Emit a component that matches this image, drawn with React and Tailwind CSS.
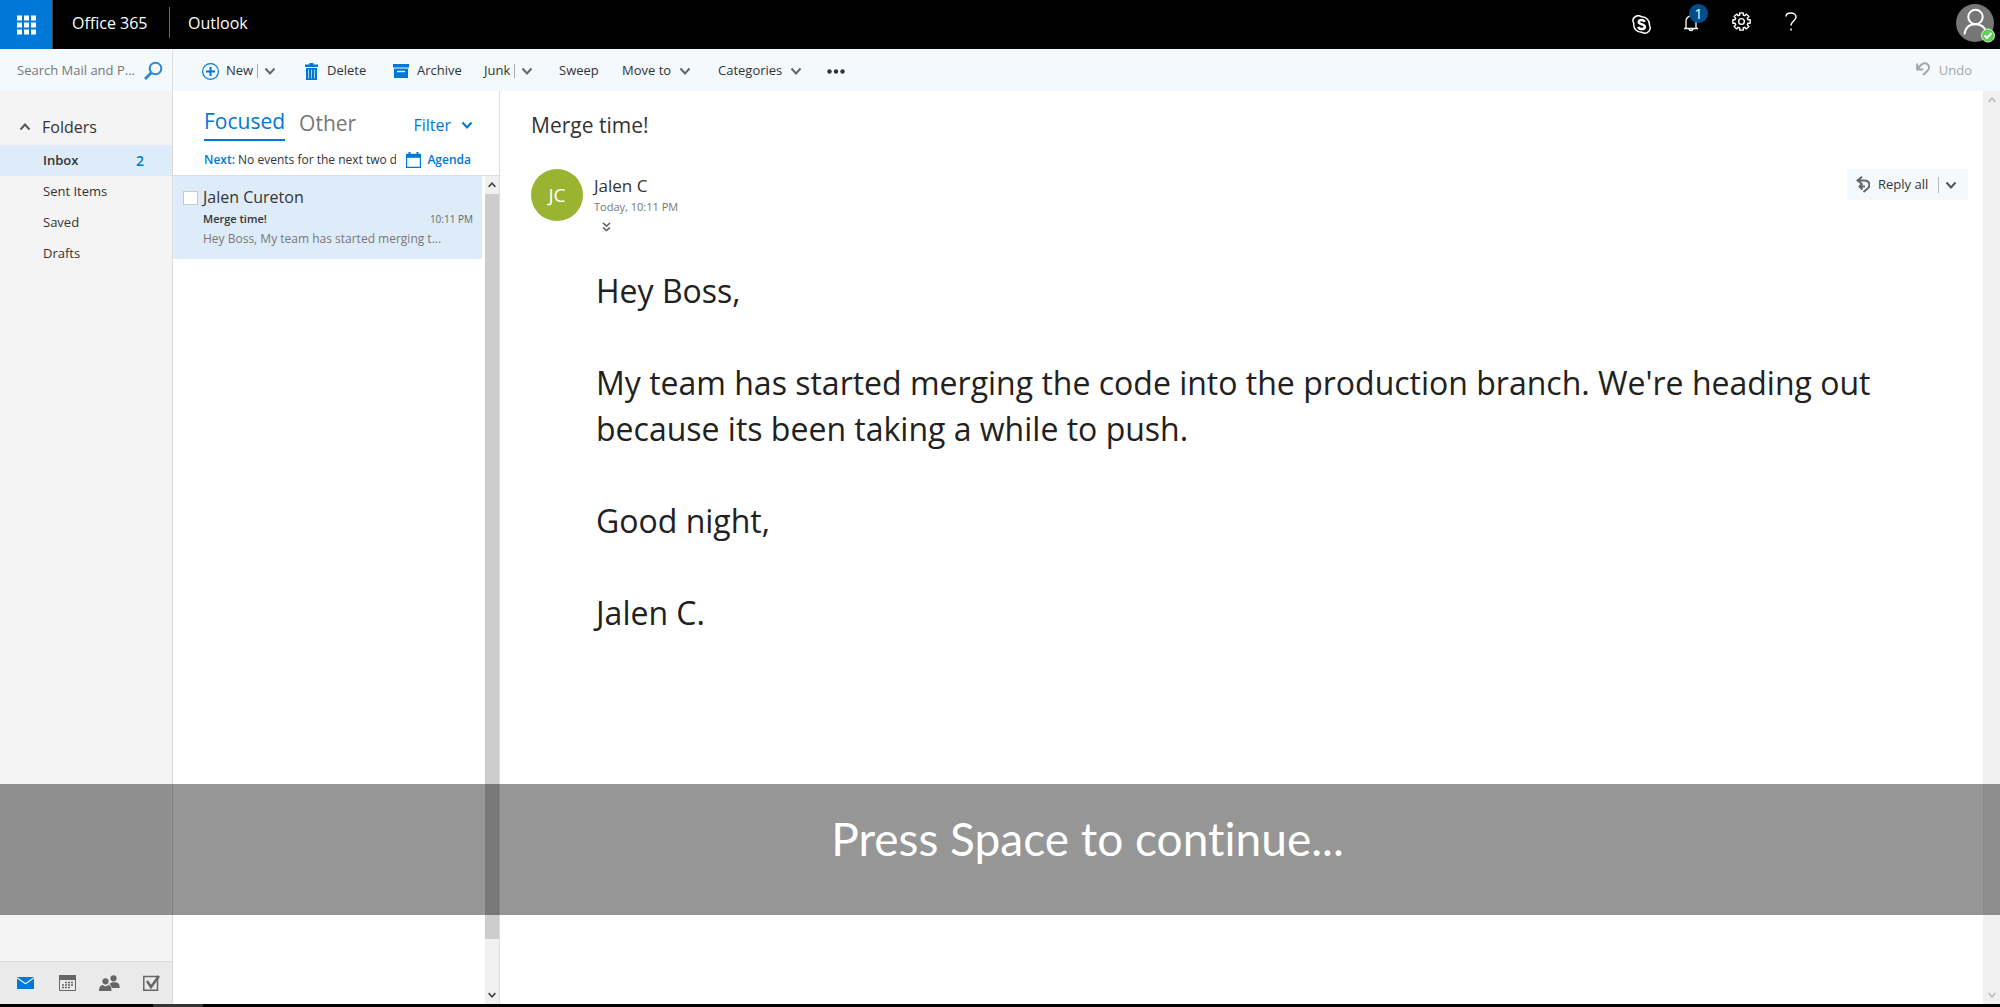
import React from "react";

function Chevron({ up = false, className = "" }) {
  return (
    <svg viewBox="0 0 12 12" className={"h-3 w-3 shrink-0 " + className} fill="none" stroke="currentColor" strokeWidth="2" aria-hidden="true">
      <path d={up ? "M1.5 8.5 6 3.5l4.500 5" : "M1.500 3.500 6 8.500l4.500-5"} />
    </svg>
  );
}

const GEAR = Array.from({ length: 8 }, (_, i) => {
  const a = (i * Math.PI) / 4;
  return [[-0.27, 6.3], [-0.2, 8.4], [0.2, 8.4], [0.27, 6.3]]
    .map(([d, r]) => `${(9 + r * Math.sin(a + d)).toFixed(2)},${(9 - r * Math.cos(a + d)).toFixed(2)}`)
    .join(" ");
}).join(" ");

function Header() {
  return (
    <header className="flex h-[49px] shrink-0 items-center bg-black text-white">
      <button aria-label="App launcher" className="flex h-full w-[53px] items-center justify-center border-r border-[#444] bg-[#0078d7]">
        <svg width="20" height="20" viewBox="0 0 20 20" fill="white" aria-hidden="true">
          {[1, 8, 15].map((y) => [1, 8, 15].map((x) => <rect key={x + "-" + y} x={x} y={y - 0.5} width="5" height="5" />))}
        </svg>
      </button>
      <a href="#office" className="w-[116px] pb-1 pl-[19px] text-base">Office 365</a>
      <a href="#outlook" className="mb-1 flex h-[31px] items-center border-l border-[#666] pl-[18px] text-base">Outlook</a>
      <div className="ml-auto flex h-full items-center">
        <button aria-label="Skype" className="flex w-[50px] justify-center">
          <svg width="19" height="19" viewBox="0 0 19 19" fill="none" stroke="white" strokeWidth="1.500" aria-hidden="true">
            <path d="M9.500 1.800C8 .6 5.500.400 3.500 1.500 1.200 2.800.3 5.500 1.700 8.200 1.200 13.500 4.500 17.600 10 17.300c2.500 1.300 5.400.9 7-1.200 1.400-1.800 1.500-3.800.5-5.600.2-5-3-8.800-8-8.700z" />
            <path d="M12.600 6.800c-.4-1.200-1.500-1.800-3-1.800-1.700 0-2.900.8-2.900 2.100 0 3 6.200 1.500 6.200 4.600 0 1.500-1.400 2.400-3.300 2.400-1.800 0-3-.8-3.400-2.200" strokeWidth="2.500" />
          </svg>
        </button>
        <button aria-label="Notifications, 1 new" className="relative flex h-full w-[50px] items-center justify-center pb-1">
          <svg width="16" height="20" viewBox="0 0 16 20" fill="none" stroke="white" strokeWidth="1.3" aria-hidden="true">
            <path d="M1 15.500h14M3 15.500V8a5 5 0 0 1 10 0v7.500M6 15.500a2 2 0 0 0 4 0" />
          </svg>
          <span className="absolute top-1 right-[8px] flex h-[19px] w-[19px] items-center justify-center rounded-full bg-[#004e8c] text-[14px]">1</span>
        </button>
        <button aria-label="Settings" className="flex w-[50px] justify-center pb-1.5">
          <svg width="19" height="19" viewBox="0 0 18 18" fill="none" stroke="white" strokeWidth="1.3" strokeLinejoin="round" aria-hidden="true">
            <polygon points={GEAR} /><circle cx="9" cy="9" r="2.700" />
          </svg>
        </button>
        <button aria-label="Help" className="flex w-[50px] justify-center pb-1.5">
          <svg width="12" height="19" viewBox="0 0 12 19" fill="none" stroke="white" strokeWidth="1.500" aria-hidden="true">
            <path d="M1 4.500C1 2.500 3 1 5.800 1S11 2.700 11 5c0 4-5 4-5 8.500M6 16.500v2" />
          </svg>
        </button>
        <button aria-label="Account" className="ml-[140px] mr-[5px] h-[43px] w-[39px] self-start pt-1">
          <svg width="39" height="39" viewBox="0 0 39 39" fill="none" aria-hidden="true">
            <circle cx="19" cy="19" r="19" fill="#767676" />
            <circle cx="19.500" cy="13" r="7.200" stroke="white" strokeWidth="2" />
            <path d="M8.500 30.500c.8-7 5-10.300 11-10.300 5.500 0 9.200 3 10.500 7.500" stroke="white" strokeWidth="2" />
            <circle cx="32" cy="31.500" r="6.500" fill="#5bd151" stroke="#d8f5d4" strokeWidth="1" />
            <path d="m28.500 31.500 2.500 2.500 4.500-5" stroke="white" strokeWidth="2" />
          </svg>
        </button>
      </div>
    </header>
  );
}

function ToolButton({ className, icon, label, split, menu }) {
  return (
    <button className={"flex h-full shrink-0 items-center text-[13px] " + className}>
      {icon}
      <span>{label}</span>
      {split && <span className="ml-1 h-3.5 w-px bg-[#aaa]" />}
      {(split || menu) && <Chevron className={split ? "ml-1.5 text-[#666]" : "ml-2 text-[#666]"} />}
    </button>
  );
}

function Toolbar() {
  return (
    <div className="flex h-[42px] shrink-0 bg-[#f4f9fd] text-[#333]">
      <div className="flex w-[173px] shrink-0 items-center border-r border-[#ddd] pt-0.5 pl-[17px]">
        <input aria-label="Search Mail and People" placeholder="Search Mail and P..." className="w-[127px] bg-transparent text-[13px] outline-none placeholder:text-[#777]" />
        <button aria-label="Search" className="text-[#2b88d8]">
          <svg width="20" height="20" viewBox="0 0 20 20" fill="none" stroke="currentColor" strokeWidth="2" aria-hidden="true">
            <circle cx="11.500" cy="7.500" r="5.800" /><path d="M7.500 11.500 1 18" strokeWidth="3" />
          </svg>
        </button>
      </div>
      <div className="flex h-full items-center pt-0.5 pl-[29px]">
        <ToolButton className="w-[103px]" label="New" split icon={
          <svg className="mr-[7px]" width="17" height="17" viewBox="0 0 17 17" fill="none" stroke="#0078d7" aria-hidden="true">
            <circle cx="8.500" cy="8.500" r="7.900" strokeWidth="1.200" /><path d="M8.500 4v9M4 8.500h9" strokeWidth="2" />
          </svg>} />
        <ToolButton className="w-[88px]" label="Delete" icon={
          <svg className="mr-[9px]" width="13" height="17" viewBox="0 0 13 17" fill="#0078d7" aria-hidden="true">
            <path d="M4.500 0h4v1.500H13V4H0V1.500h4.500zM1 5h11v12H1z" />
            <path d="M3.500 6.500v9M6.500 6.500v9M9.500 6.500v9" stroke="#a5d0f2" />
          </svg>} />
        <ToolButton className="w-[91px]" label="Archive" icon={
          <svg className="mr-2" width="16" height="14" viewBox="0 0 16 14" fill="#0078d7" aria-hidden="true">
            <path d="M0 0h16v3.500H0zM1 4.500h14V14H1z" /><path d="M4 7.500h8" stroke="white" strokeWidth="1.400" />
          </svg>} />
        <ToolButton className="w-[75px]" label="Junk" split />
        <ToolButton className="w-[63px]" label="Sweep" />
        <ToolButton className="w-[96px]" label="Move to" menu />
        <ToolButton className="w-[109px]" label="Categories" menu />
        <button aria-label="More actions">
          <svg width="18" height="5" viewBox="0 0 18 5" fill="#333" aria-hidden="true"><circle cx="2.500" cy="2.500" r="2.200" /><circle cx="9" cy="2.500" r="2.200" /><circle cx="15.500" cy="2.500" r="2.200" /></svg>
        </button>
      </div>
      <button disabled className="ml-auto mr-[28px] flex items-center gap-[9px] pt-0.5 text-[13px] text-[#a6a6a6]">
        <svg className="mb-1" width="14" height="14" viewBox="0 0 14 14" fill="none" stroke="currentColor" strokeWidth="2" aria-hidden="true">
          <path d="M1.200 1.500V7.500h6M1.500 7.200C4 3.500 6 1.200 8.500 1.200c3.500 0 5.500 3 4 6C11.500 9 9.500 11 7 13" />
        </svg>
        Undo
      </button>
    </div>
  );
}

function Sidebar() {
  return (
    <nav className="flex w-[173px] shrink-0 flex-col border-r border-[#dcdcdc] bg-[#f4f4f4] text-[#333]">
      <button className="mt-[18px] flex h-9 items-center pl-[19px] text-base">
        <Chevron up className="mr-[11px] text-[#555]" />Folders
      </button>
      {["Inbox", "Sent Items", "Saved", "Drafts"].map((name, i) => (
        <a key={name} href={"#" + name} className={"flex h-[31px] items-center justify-between pr-7 pl-[43px] text-[13px] " + (i === 0 ? "bg-[#deecf9] font-semibold" : "")}>
          {name}{i === 0 && <span className="text-sm text-[#0078d7]">2</span>}
        </a>
      ))}
      <div className="mt-auto grid h-[43px] grid-cols-4 items-center border-t border-[#dcdcdc] bg-[#eaeaea] pl-[5px] text-[#666]">
        <button aria-label="Mail" className="flex justify-center">
          <svg width="17" height="12" viewBox="0 0 17 12" fill="#0078d7" aria-hidden="true"><path d="M0 0h17v12H0z" /><path d="m0 .8 8.500 6L17 .8" fill="none" stroke="#eee" strokeWidth="1.300" /></svg>
        </button>
        <button aria-label="Calendar" className="flex justify-center">
          <svg width="17" height="16" viewBox="0 0 17 16" fill="none" stroke="currentColor" aria-hidden="true">
            <path d="M.5.500h16v15H.5z" /><path d="M0 2.500h17" strokeWidth="5" />
            <path d="M6 7.500h9M3 10h12M3 12.500h9" strokeWidth="1.500" strokeDasharray="2 1" />
          </svg>
        </button>
        <button aria-label="People" className="flex justify-center">
          <svg width="21" height="16" viewBox="0 0 21 16" fill="currentColor" aria-hidden="true">
            <circle cx="14.500" cy="3.300" r="3.100" /><path d="M10.500 9c1-2 7-2.500 9-.5.800 1 1.200 2.500 1.200 4.500h-8C12.500 11 11.500 10 10.500 9z" />
            <circle cx="6.500" cy="6.300" r="3.100" /><path d="M0 16c0-4 1.500-6 3.500-6l3 1.500 3-1.500c2 0 3 2 3 6z" />
          </svg>
        </button>
        <button aria-label="Tasks" className="flex justify-center">
          <svg width="17" height="16" viewBox="0 0 17 16" fill="none" stroke="currentColor" aria-hidden="true"><path d="M.8 1.500h13.700v13.700H.8z" strokeWidth="1.500" /><path d="m4 6 4 6L16 1" strokeWidth="2.500" /></svg>
        </button>
      </div>
    </nav>
  );
}

function MailList() {
  return (
    <section className="flex w-[327px] shrink-0 flex-col border-r border-[#ddd] bg-white">
      <div className="flex h-[50px] items-end pr-[26px] pl-[31px]">
        <button className="h-9 border-b-2 border-[#0078d7] pb-1 text-[21px] leading-8 text-[#0078d7]">Focused</button>
        <button className="ml-[14px] h-9 text-[21px] leading-9 text-[#777]">Other</button>
        <button className="ml-auto flex h-8 items-center gap-2.5 text-base text-[#0078d7]">Filter<Chevron /></button>
      </div>
      <div className="flex h-[35px] items-center border-b border-[#ddd] pt-1 pr-[28px] pl-[31px] text-[12px] text-[#333]">
        <p className="mr-2.5 min-w-0 flex-1 overflow-hidden whitespace-nowrap"><span className="font-semibold text-[#0078d7]">Next:</span> No events for the next two days</p>
        <button className="flex items-center gap-1.5 font-semibold text-[#0078d7]">
          <svg width="15" height="16" viewBox="0 0 15 16" fill="none" stroke="currentColor" aria-hidden="true"><path d="M.6 2.500h13.800v12.800H.6z" strokeWidth="1.200" /><path d="M0 3.800h15" strokeWidth="4" /><path d="M3.500 0v3M11.500 0v3" strokeWidth="2" /></svg>
          Agenda
        </button>
      </div>
      <div className="flex min-h-0 flex-1">
        <div className="flex-1 pr-[3px]">
          <article className="grid h-[83px] grid-cols-[30px_1fr] content-start bg-[#deecf9] pt-[9px] pr-[9px] text-[#333]">
            <input type="checkbox" aria-label="Select message from Jalen Cureton" className="mt-1.5 ml-2.5 h-[14px] w-[15px] appearance-none border border-[#c8c8c8] bg-white" />
            <div>
              <h2 className="text-base leading-6">Jalen Cureton</h2>
              <p className="flex h-5 items-center justify-between"><span className="text-[11px] font-semibold">Merge time!</span><time className="text-[10px] text-[#666]">10:11 PM</time></p>
              <p className="h-5 text-[12px] leading-5 text-[#777]">Hey Boss, My team has started merging t...</p>
            </div>
          </article>
        </div>
        <div className="flex w-[14px] flex-col items-center bg-[#f0f0f0] text-[#444]">
          <Chevron up className="my-[3px] scale-75" />
          <div className="h-[745px] w-full bg-[#cdcdcd]" />
          <Chevron className="mt-auto mb-[3px] scale-75" />
        </div>
      </div>
    </section>
  );
}

function Message() {
  return (
    <main className="flex min-w-0 flex-1 bg-white text-[#333]">
      <article className="min-w-0 flex-1 pr-[15px] pl-[31px]">
        <h1 className="pt-[18px] text-[21px] leading-8">Merge time!</h1>
        <div className="mt-7 flex items-start">
          <div className="flex h-[52px] w-[52px] items-center justify-center rounded-full bg-[#9ab331] text-[19px] text-white">JC</div>
          <div className="ml-[11px] pt-1.5">
            <p className="text-[17px] leading-[22px]">Jalen C</p>
            <p className="text-[11px] leading-5 text-[#777]">Today, 10:11 PM</p>
            <button aria-label="Show details" className="ml-2 flex h-5 items-center">
              <svg width="9" height="10" viewBox="0 0 9 10" fill="none" stroke="#555" strokeWidth="1.500" aria-hidden="true"><path d="m1 1 3.500 3L8 1M1 5.500l3.500 3 3.500-3" /></svg>
            </button>
          </div>
          <button className="ml-auto flex h-[31px] w-[121px] items-center bg-[#f4f9fd] pl-[9px] text-[13px]">
            <svg className="mr-2" width="14" height="17" viewBox="0 0 14 17" fill="none" stroke="#666" strokeWidth="2" aria-hidden="true">
              <path d="M6 .8 1.500 4.500 6 8M2 4.500h6c6.500 0 6.500 6 3 8.500l-3.500 3M6.500 7.500 3.500 10.500l3 3M4 10.500h5" />
            </svg>
            Reply all
            <span className="ml-2.5 h-4 w-px bg-[#bbb]" />
            <Chevron className="ml-1.5 text-[#555]" />
          </button>
        </div>
        <div className="mt-[31px] mr-[80px] ml-[65px] space-y-[46px] text-[32px] leading-[46px] text-[#212121]">
          <p>Hey Boss,</p>
          <p>My team has started merging the code into the production branch. We're heading out because its been taking a while to push.</p>
          <p>Good night,</p>
          <p>Jalen C.</p>
        </div>
      </article>
      <div className="flex w-[17px] shrink-0 flex-col items-center justify-between bg-[#f0f0f0] py-[3px] text-[#bbb]">
        <Chevron up className="scale-75" />
        <Chevron className="scale-75" />
      </div>
    </main>
  );
}

export default function App() {
  return (
    <div className="relative flex h-screen flex-col overflow-hidden bg-black font-['Open_Sans',sans-serif]">
      <Header />
      <Toolbar />
      <div className="flex min-h-0 flex-1">
        <Sidebar />
        <MailList />
        <Message />
      </div>
      <div className="h-[3px] shrink-0 bg-black pl-[153px]"><div className="h-full w-[50px] bg-[#333]" /></div>
      <div role="status" className="absolute inset-x-0 bottom-[92px] flex h-[131px] items-center justify-center bg-black/41 pb-[22px] pl-[175px] font-['Lato',sans-serif] text-[46px] text-white [font-variant-ligatures:none]">Press Space to continue...</div>
    </div>
  );
}
